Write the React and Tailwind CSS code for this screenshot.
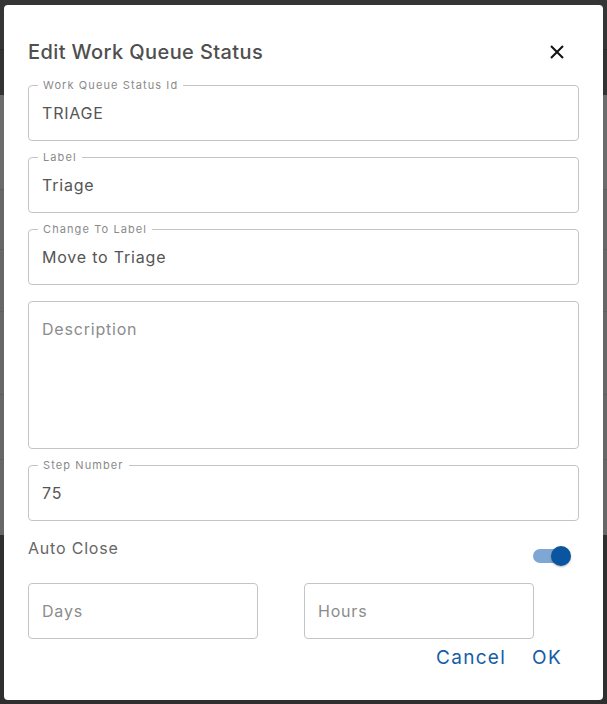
import React, { useState } from 'react';

const font = { fontFamily: 'Inter, "Open Sans", sans-serif' };

const Field = ({ label, value, placeholder, tall, className = '' }) => (
  <div className={`relative rounded-[4px] border border-[#c4c4c4] ${tall ? 'h-[148px]' : 'h-[56px]'} ${className}`}>
    {label && (
      <span className="absolute left-[9px] top-[-8px] bg-white px-[5px] text-[11px] leading-[14px] text-[#8a8a8a] tracking-[1.1px]">
        {label}
      </span>
    )}
    <div className={`px-[13px] pt-[16px] text-[16px] leading-[22px] tracking-[0.8px] ${value ? 'text-[#555]' : 'text-[#8c8c8c]'}`}>
      {value || placeholder}
    </div>
  </div>
);

const App = () => {
  const [autoClose, setAutoClose] = useState(true);

  return (
    <div className="relative h-[704px] w-[607px] overflow-hidden bg-[#343434]" style={font}>
      {/* page behind the backdrop */}
      <div className="flex h-full flex-col">
        <div className="h-[50px] border-b border-[#2a2a2a] bg-[#353535]" />
        <div className="h-[45px] bg-[#333]" />
        <div className="h-[95px] border-b border-[#5e5e5e] bg-[#6b6b6b]" />
        <div className="h-[60px] border-b border-[#5e5e5e] bg-[#676767]" />
        <div className="h-[62px] border-b border-[#5e5e5e] bg-[#676767]" />
        <div className="h-[83px] border-b border-[#5e5e5e] bg-[#676767]" />
        <div className="h-[65px] border-b border-[#5e5e5e] bg-[#676767]" />
        <div className="h-[75px] bg-[#676767]" />
        <div className="flex-1 bg-[#2f2f2f]" />
      </div>

      <div className="absolute left-[4px] top-[5px] flex h-[695px] w-[599px] flex-col rounded-[4px] bg-white px-6">
        <div className="flex items-center justify-between pt-[31px]">
          <h2 className="text-[20px] font-medium leading-[32px] tracking-[0.4px] text-[#4f4f4f]">Edit Work Queue Status</h2>
          <button className="mr-[12px] flex h-[32px] w-[20px] items-center justify-center">
            <svg width="14" height="14" viewBox="0 0 14 14">
              <path d="M1 1 L13 13 M13 1 L1 13" stroke="#111" strokeWidth="2" />
            </svg>
          </button>
        </div>

        <div className="mt-[17px] flex flex-col gap-[16px]">
          <Field label="Work Queue Status Id" value="TRIAGE" />
          <Field label="Label" value="Triage" />
          <Field label="Change To Label" value="Move to Triage" />
          <Field placeholder="Description" tall />
          <Field label="Step Number" value="75" />
        </div>

        <div className="mt-[16px] flex items-start justify-between">
          <span className="text-[16px] leading-[22px] tracking-[0.8px] text-[#666]">Auto Close</span>
          <button
            onClick={() => setAutoClose(!autoClose)}
            className="relative mr-[12px] mt-[12px] h-[14px] w-[34px] rounded-full bg-[#7ea8d3]"
          >
            <span className={`absolute top-[-3px] h-[20px] w-[20px] rounded-full bg-[#0a55a0] shadow-[0_1px_2px_rgba(0,0,0,0.3)] ${autoClose ? 'right-[-4px]' : 'left-[-4px]'}`} />
          </button>
        </div>

        <div className="mt-[20px] grid grid-cols-[230px_230px] gap-x-[46px]">
          <Field placeholder="Days" />
          <Field placeholder="Hours" />
        </div>

        <div className="mt-[7px] flex justify-end gap-[26px] pr-[17px] text-[19px] leading-[24px] tracking-[1.3px] text-[#165ca6]">
          <button>Cancel</button>
          <button>OK</button>
        </div>
      </div>
    </div>
  );
};

export default App;
